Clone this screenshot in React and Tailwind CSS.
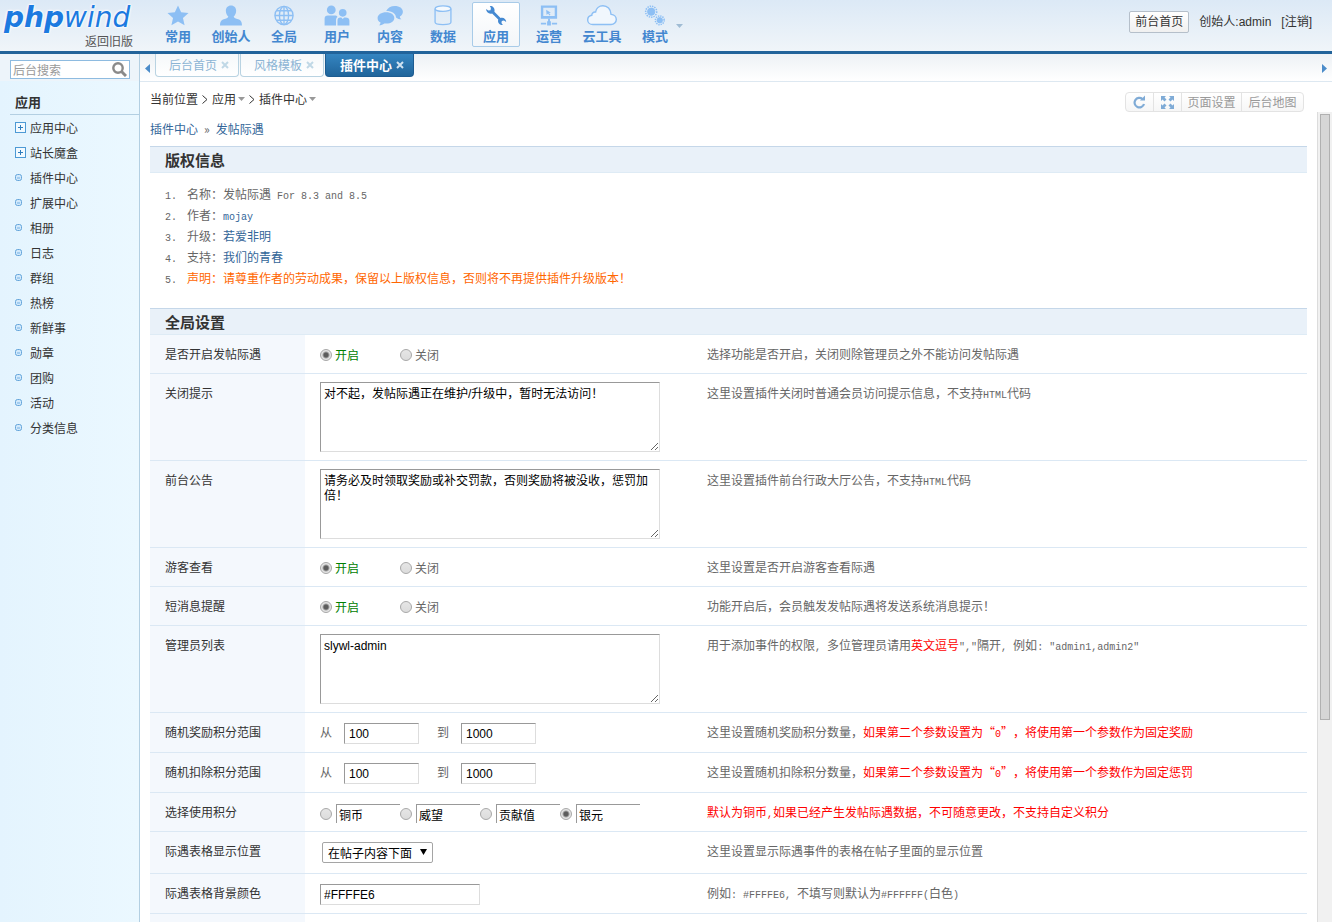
import React, { useState } from "react";

const navItems = [
  { name: "常用", icon: "star" },
  { name: "创始人", icon: "person" },
  { name: "全局", icon: "globe" },
  { name: "用户", icon: "users" },
  { name: "内容", icon: "chat" },
  { name: "数据", icon: "data" },
  { name: "应用", icon: "wrench" },
  { name: "运营", icon: "network" },
  { name: "云工具", icon: "cloud" },
  { name: "模式", icon: "gears" },
];

const menuItems = [
  { name: "应用中心", folder: true },
  { name: "站长魔盒", folder: true },
  { name: "插件中心" },
  { name: "扩展中心" },
  { name: "相册" },
  { name: "日志" },
  { name: "群组" },
  { name: "热榜" },
  { name: "新鲜事" },
  { name: "勋章" },
  { name: "团购" },
  { name: "活动" },
  { name: "分类信息" },
];

const credits = ["铜币", "威望", "贡献值", "银元"];

const NavIcon = ({ type }) => {
  switch (type) {
    case "star":
      return (
        <path d="M16 .5l3.300 7 7.700.8-5.800 5.200 1.700 7.700L16 17.400l-6.900 3.800 1.700-7.700L5 8.300l7.700-.8z" fill="currentColor" />
      );
    case "person":
      return (
        <path d="M16 0.500c3.400 0 5.400 2.500 5.400 5.600 0 2.600-1 4.800-2.600 6 .3 1.700 2.400 2 4.700 2.800 2.600.9 4 2.400 4 6.600h-23c0-4.200 1.400-5.700 4-6.600 2.300-.8 4.400-1.100 4.700-2.800-1.600-1.200-2.600-3.400-2.600-6 0-3.100 2-5.600 5.400-5.600z" fill="currentColor" />
      );
    case "globe":
      return (
        <g fill="none" stroke="currentColor" strokeWidth="1.400">
          <circle cx="16" cy="11" r="9.500" />
          <ellipse cx="16" cy="11" rx="4.800" ry="9.500" />
          <path d="M16 1.500v19M6.500 11h19M8 6h16M8 16h16" />
        </g>
      );
    case "users":
      return (
        <g fill="currentColor">
          <circle cx="10" cy="5.200" r="4.600" />
          <path d="M3 21.500v-7c0-2.500 1.200-3.500 3.500-3.500h7c1.500 0 2.500.5 3 1.500-1 .8-1.500 1.800-1.500 3.300v5.700z" />
          <circle cx="22" cy="8.200" r="4" />
          <path d="M16.500 21.500v-5c0-2 1-3.300 3-3.300h1l1.500 1.500 1.500-1.500h1.500c2.500 0 4 1 4 3.300v5z" />
        </g>
      );
    case "chat":
      return (
        <g fill="currentColor">
          <path d="M12 7.500c5 0 8.500 2.500 8.500 6s-3.500 6-8.500 6l-2-.1c-1.500 1.300-3.500 2-5.500 1.900 1-.8 1.500-1.800 1.600-2.900C4 17.300 3 15.500 3 13.500c0-3.500 4-6 9-6z" />
          <path d="M12 6.300C13.500 3 17 1 21 1c5 0 8.500 2.500 8.500 6 0 2.200-1.300 4-3.200 5 .1 1.300.7 2.300 1.700 3-2.200 0-4.200-.6-5.700-2 -.2-4-4-6.700-10.300-6.700z" />
        </g>
      );
    case "data":
      return (
        <g fill="none" stroke="currentColor" strokeWidth="1.400">
          <ellipse cx="16" cy="3.800" rx="8.300" ry="2.800" fill="#f4f9fe" />
          <path d="M7.700 4v14c0 1.500 3 2.500 8.300 2.500s8.300-1 8.300-2.500V4" />
        </g>
      );
    case "wrench":
      return (
        <path d="M9.500 1c3-.3 5.300 2 5 5l-.2 1.200 6.500 6.300c3-1 5.700 1 5.900 4.200l-2.400-1.500-2.200.5-.4 2.200 1.500 2.100c-3.400 0-5.800-2.500-4.900-5.900l-6.400-6.200C8.500 9.800 5.600 7.500 5.600 4.200l2.400 1.600 2.300-.4.400-2.300z" fill="currentColor" />
      );
    case "network":
      return (
        <g fill="currentColor">
          <path fillRule="evenodd" d="M7.500 0.500h17v14h-17zM10 3v8.500h12V3z" />
          <path d="M13 5l5 3-2 .3 1.500 2-1 .7-1.500-2-1.500 1.500zM15 14.500h2V17h-2zM7.500 18.500H13v2H7.500zM19 18.500h5.500v2H19zM14 17h4v4.500h-4z" />
        </g>
      );
    case "cloud":
      return (
        <path d="M6.500 20.500h19c3 0 5.500-2.400 5.500-5.200 0-3-2.300-5.300-5.500-5.500C25.300 4.300 21.500.8 17 .8c-4 0-7.200 2.500-7.700 6.500C6.500 7 5.300 9 5.300 10.800 2.700 11.300 1 13.500 1 15.700c0 2.800 2.400 4.800 5.500 4.800z" fill="#f1f7fd" stroke="currentColor" strokeWidth="1.500" />
      );
    default:
      return (
        <g fill="none" stroke="currentColor">
          <circle cx="12" cy="7" r="5.800" strokeWidth="1.600" strokeDasharray="1.500 1" />
          <circle cx="12" cy="7" r="3.800" fill="currentColor" />
          <circle cx="21" cy="16" r="4.600" strokeWidth="1.600" strokeDasharray="1.400 1" />
          <circle cx="21" cy="16" r="2.800" fill="currentColor" />
        </g>
      );
  }
};

// half-width characters take exactly half of a 12px hanzi
const mix = (text) =>
  text.split(/([\x20-\x7e]+)/).map((part, i) =>
    i % 2 ? (
      <span key={i} className="whitespace-pre-wrap font-['Liberation_Mono',monospace] text-[10px] leading-none">
        {part}
      </span>
    ) : (
      part
    )
  );

const Caret = ({ className }) => (
  <svg className={className} width="7" height="4" viewBox="0 0 7 4">
    <path d="M0 0h7L3.500 4z" fill="currentColor" />
  </svg>
);

const Chevron = () => (
  <svg className="mx-1" width="6" height="9" viewBox="0 0 6 9">
    <path d="M.5.5l4.500 4-4.500 4" fill="none" stroke="#333" />
  </svg>
);

const Radio = (props) => (
  <input
    type="radio"
    className="h-3 w-3 shrink-0 appearance-none rounded-full border border-[#a9a9a9] bg-linear-to-b from-[#e6e6e6] to-[#dcdcdc] checked:bg-[radial-gradient(circle,#5c5c5c_0_2px,#e4e4e4_4px)]"
    {...props}
  />
);

const Section = ({ children }) => (
  <h2 className="h-[27px] border-t border-b border-t-[#c5d7e9] border-b-[#deebf5] bg-[#e9f1f9] px-[15px] text-[15px] leading-[25px] font-bold text-[#333]">
    {children}
  </h2>
);

const Row = ({ label, htmlFor, children, hint }) => (
  <tr className="border-b border-[#dbe8f4] align-top">
    <th scope="row" className="bg-[#f4f8fd] px-[15px] py-2 text-left leading-[22px] font-normal text-[#333]">
      {htmlFor ? <label htmlFor={htmlFor}>{label}</label> : label}
    </th>
    <td className="px-[15px] py-2">{children}</td>
    <td className="px-[15px] py-2 leading-[22px]">{hint}</td>
  </tr>
);

const Switch = ({ name }) => {
  const [on, setOn] = useState(true);
  return (
    <div className="flex h-[22px] pt-0.5">
      <label className="flex w-20 items-center gap-[3px] text-[#008000]">
        <Radio name={name} checked={on} onChange={() => setOn(true)} />
        开启
      </label>
      <label className="flex w-20 items-center gap-[3px]">
        <Radio name={name} checked={!on} onChange={() => setOn(false)} />
        关闭
      </label>
    </div>
  );
};

const Area = (props) => (
  <textarea
    className="block h-[70px] w-[340px] border border-t-[#999] border-r-[#ddd] border-b-[#ddd] border-l-[#999] bg-white px-[3px] py-1 font-['Liberation_Sans','Noto_Sans_CJK_SC',sans-serif] leading-[15px] text-black"
    {...props}
  />
);

const Box = ({ className, ...props }) => (
  <input
    type="text"
    className={`h-[21px] border border-t-[#999] border-r-[#ddd] border-b-[#ddd] border-l-[#999] bg-white font-['Liberation_Sans','Noto_Sans_CJK_SC',sans-serif] text-black ${className}`}
    {...props}
  />
);

const Range = ({ id }) => (
  <div className="flex h-[23px] items-start">
    <label htmlFor={`${id}From`} className="w-6 leading-[22px]">从</label>
    <Box id={`${id}From`} className="mt-0.5 w-[75px] px-1" defaultValue="100" />
    <label htmlFor={`${id}To`} className="ml-[18px] w-6 leading-[22px]">到</label>
    <Box id={`${id}To`} className="mt-0.5 w-[75px] px-1" defaultValue="1000" />
  </div>
);

const Tab = ({ name, active }) => (
  <div
    className={
      active
        ? "flex h-[23px] items-center gap-1 rounded-b border border-t-0 border-[#1d5c91] bg-linear-to-b from-[#3585c1] to-[#20659b] pr-[9px] pl-[14px] text-white"
        : "flex h-[23px] items-center gap-1 rounded-b border border-t-0 border-[#b9d3e2] bg-linear-to-b from-[#f5f8fa] to-white pr-[9px] pl-[13px] text-[#8cb4d4]"
    }
  >
    <a href="#" className={active ? "text-[13px] font-bold" : ""}>{name}</a>
    <button type="button" aria-label={`关闭${name}`} className={active ? "text-[#cfe2f1]" : "text-[#c0d8e6]"}>
      <svg width="8" height="8" viewBox="0 0 8 8">
        <path d="M1 1l6 6M7 1L1 7" stroke="currentColor" strokeWidth="2" />
      </svg>
    </button>
  </div>
);

const App = () => {
  const [credit, setCredit] = useState("银元");

  return (
    <div
      lang="zh-CN"
      className="flex h-screen flex-col overflow-hidden bg-white font-['Noto_Sans_CJK_SC',sans-serif] text-xs text-[#666] [text-spacing-trim:space-all]"
    >
      <header className="flex h-[54px] shrink-0 justify-between border-b-[3px] border-[#22639a] bg-linear-to-b from-[#dce9f6] to-[#f0f5f9]">
        <div className="flex">
          <div className="flex w-[154px] flex-col pt-px pl-1">
            <div className="h-[33px] font-['DejaVu_Sans',sans-serif] text-[28px] leading-[33px] whitespace-nowrap text-[#1c7ae0] italic [text-shadow:0_0_2px_#fff,0_0_3px_#fff,0_0_3px_#fff]">
              <b>php</b>wind
            </div>
            <a href="#" className="mr-[21px] text-right leading-[14px] text-[#555]">返回旧版</a>
          </div>
          <nav className="flex gap-[5px] pt-0.5">
            {navItems.map((item) => (
              <a
                href="#"
                key={item.name}
                className={
                  item.icon === "wrench"
                    ? "flex h-[45px] w-12 flex-col items-center rounded-xs border border-[#a8cbe8] bg-linear-to-b from-white to-[#f3f6f9] pt-0.5 text-[#4489d2]"
                    : "flex h-[45px] w-12 flex-col items-center border border-transparent pt-0.5 text-[#8dbff4]"
                }
              >
                <svg width="32" height="22" viewBox="0 0 32 22">
                  <NavIcon type={item.icon} />
                </svg>
                <span className="text-[13px] leading-5 font-bold whitespace-nowrap text-[#4387d0]">
                  {item.name}
                </span>
              </a>
            ))}
            <button type="button" aria-label="更多" className="-ml-2 h-12 text-[#a0bcd4]">
              <Caret />
            </button>
          </nav>
        </div>
        <div className="mt-3 flex h-5 items-center gap-2.5 pr-5 font-['Liberation_Sans','Noto_Sans_CJK_SC',sans-serif] text-[#333]">
          <button
            type="button"
            className="h-[22px] rounded-xs border border-[#b5bfca] bg-linear-to-b from-white to-[#f0f0f0] px-[5px]"
          >
            前台首页
          </button>
          <span>创始人:admin</span>
          <a href="#">[注销]</a>
        </div>
      </header>

      <div className="flex min-h-0 flex-1">
        <aside className="w-[140px] shrink-0 border-r border-[#b3cfe2] bg-linear-to-r from-[#e4f4fe] to-[#ebf8ff]">
          <div className="h-[27px] bg-[#edf4fa] px-2.5 pt-1.5 pr-[9px]">
            <div className="flex h-[19px] items-center border border-[#8ebbe0] bg-white px-0.5">
              <input
                type="text"
                aria-label="后台搜索"
                placeholder="后台搜索"
                className="min-w-0 flex-1 bg-transparent outline-none placeholder:text-[#999]"
              />
              <button type="button" aria-label="搜索">
                <svg width="15" height="15" viewBox="0 0 15 15" fill="none" stroke="#8a8a8a">
                  <circle cx="6" cy="6" r="4.700" strokeWidth="2.400" />
                  <path d="M9.500 9.500l4.500 4.500" strokeWidth="3" />
                </svg>
              </button>
            </div>
          </div>
          <h1 className="mt-2.5 ml-2.5 h-6 border-b border-[#b3cfe2] pl-[5px] text-[13px] leading-[22px] font-bold text-[#333]">
            应用
          </h1>
          <ul className="text-[#333]">
            {menuItems.map((item) => (
              <li key={item.name}>
                <a href="#" className="flex h-[25px] items-center pl-[15px]">
                  <span className="w-[15px]">
                    {item.folder ? (
                      <svg width="11" height="11" viewBox="0 0 11 11">
                        <rect x=".5" y=".5" width="10" height="10" fill="#f2faff" stroke="#4d9ad5" />
                        <path d="M3 5.500h5M5.500 3v5" stroke="#2f7dbd" />
                      </svg>
                    ) : (
                      <svg width="7" height="7" viewBox="0 0 7 7">
                        <rect x=".5" y=".5" width="6" height="6" rx="2" fill="#d2e9fb" stroke="#65a5da" />
                        <path d="M2 3.500h3M2 4.500h3" stroke="#a3cdf0" />
                      </svg>
                    )}
                  </span>
                  {item.name}
                </a>
              </li>
            ))}
          </ul>
        </aside>

        <main className="flex min-w-0 flex-1 flex-col">
          <div className="flex h-7 shrink-0 items-start justify-between border-b border-[#dde8f1] bg-linear-to-b from-[#edf1f5] to-white pr-[5px] pl-[5px]">
            <div className="flex gap-px">
              <button type="button" aria-label="向左" className="mr-1 h-7 text-[#4c8cca]">
                <svg width="5" height="9" viewBox="0 0 5 9">
                  <path d="M5 0v9L0 4.500z" fill="currentColor" />
                </svg>
              </button>
              <Tab name="后台首页" />
              <Tab name="风格模板" />
              <Tab name="插件中心" active />
            </div>
            <button type="button" aria-label="向右" className="h-7 text-[#4c8cca]">
              <svg width="5" height="9" viewBox="0 0 5 9">
                <path d="M0 0v9l5-4.500z" fill="currentColor" />
              </svg>
            </button>
          </div>

          <div className="flex h-[30px] shrink-0 items-end justify-between pr-7 pl-2.5">
            <div className="flex h-6 items-start text-[#333]">
              <div className="flex h-[22px] items-center">
                当前位置
                <Chevron />
                <a href="#" className="flex items-center gap-0.5">
                  应用
                  <Caret className="text-[#999]" />
                </a>
                <Chevron />
                <a href="#" className="flex items-center gap-0.5">
                  插件中心
                  <Caret className="text-[#999]" />
                </a>
              </div>
            </div>
            <div className="flex h-5 divide-x divide-[#e3e3e3] rounded-sm border border-[#e3e3e3] bg-linear-to-b from-white to-[#f6f6f6] text-[#999]">
              <button type="button" aria-label="刷新" className="flex w-7 items-center justify-center">
                <svg width="13" height="14" viewBox="0 0 13 14" fill="none" stroke="#7fabd6" strokeWidth="2.200">
                  <path d="M9.500 4A4.800 4.800 0 1 0 11 9" />
                  <path d="M7 5.500h5V.5z" fill="#7fabd6" stroke="none" />
                </svg>
              </button>
              <button type="button" aria-label="全屏" className="flex w-7 items-center justify-center">
                <svg width="13" height="13" viewBox="0 0 13 13" fill="#7fabd6">
                  <path d="M0 0h5L3.500 1.500l2 2-2 2-2-2L0 5zM13 0v5l-1.500-1.500-2 2-2-2 2-2L8 0zM0 13V8l1.500 1.500 2-2 2 2-2 2L5 13zM13 13H8l1.500-1.500-2-2 2-2 2 2L13 8z" />
                </svg>
              </button>
              <button type="button" className="w-[60px]">页面设置</button>
              <button type="button" className="w-[61px]">后台地图</button>
            </div>
          </div>

          <div className="flex min-h-0 flex-1">
            <div className="min-w-0 flex-1 overflow-hidden px-2.5">
              <div className="my-[7px] flex h-5 items-center gap-1.5 text-[#336699]">
                <a href="#">插件中心</a>
                <span className="text-[#666]">»</span>
                <a href="#">发帖际遇</a>
              </div>

              <Section>版权信息</Section>
              <ol className="px-[15px] pt-2.5 pb-5 leading-[21px]">
                <li className="flex"><span className="w-[22px]">{mix("1.")}</span>{"名称："}<span>{mix("发帖际遇 For 8.3 and 8.5")}</span></li>
                <li className="flex"><span className="w-[22px]">{mix("2.")}</span>{"作者："}<a href="#" className="text-[#336699]">{mix("mojay")}</a></li>
                <li className="flex"><span className="w-[22px]">{mix("3.")}</span>{"升级："}<a href="#" className="text-[#336699]">若爱非明</a></li>
                <li className="flex"><span className="w-[22px]">{mix("4.")}</span>{"支持："}<a href="#" className="text-[#336699]">我们的青春</a></li>
                <li className="flex"><span className="w-[22px]">{mix("5.")}</span><span className="text-[#ff6600]">声明：请尊重作者的劳动成果，保留以上版权信息，否则将不再提供插件升级版本！</span></li>
              </ol>

              <Section>全局设置</Section>
              <table className="w-full table-fixed">
                <colgroup>
                  <col className="w-[155px]" />
                  <col className="w-[387px]" />
                  <col />
                </colgroup>
                <tbody>
                  <Row label="是否开启发帖际遇" hint="选择功能是否开启，关闭则除管理员之外不能访问发帖际遇">
                    <Switch name="open" />
                  </Row>
                  <Row label="关闭提示" htmlFor="closeTip" hint={mix("这里设置插件关闭时普通会员访问提示信息，不支持HTML代码")}>
                    <Area id="closeTip" defaultValue="对不起，发帖际遇正在维护/升级中，暂时无法访问！" />
                  </Row>
                  <Row label="前台公告" htmlFor="notice" hint={mix("这里设置插件前台行政大厅公告，不支持HTML代码")}>
                    <Area id="notice" defaultValue="请务必及时领取奖励或补交罚款，否则奖励将被没收，惩罚加倍！" />
                  </Row>
                  <Row label="游客查看" hint="这里设置是否开启游客查看际遇">
                    <Switch name="guest" />
                  </Row>
                  <Row label="短消息提醒" hint="功能开启后，会员触发发帖际遇将发送系统消息提示！">
                    <Switch name="message" />
                  </Row>
                  <Row
                    label="管理员列表"
                    htmlFor="admins"
                    hint={
                      <>
                        {mix("用于添加事件的权限, 多位管理员请用")}
                        <span className="text-[#ff0000]">英文逗号</span>
                        {mix('","隔开, 例如: "admin1,admin2"')}
                      </>
                    }
                  >
                    <Area id="admins" defaultValue="slywl-admin" />
                  </Row>
                  <Row
                    label="随机奖励积分范围"
                    hint={
                      <>
                        这里设置随机奖励积分数量，
                        <span className="text-[#ff0000]">{mix("如果第二个参数设置为“0”，将使用第一个参数作为固定奖励")}</span>
                      </>
                    }
                  >
                    <Range id="reward" />
                  </Row>
                  <Row
                    label="随机扣除积分范围"
                    hint={
                      <>
                        这里设置随机扣除积分数量，
                        <span className="text-[#ff0000]">{mix("如果第二个参数设置为“0”，将使用第一个参数作为固定惩罚")}</span>
                      </>
                    }
                  >
                    <Range id="punish" />
                  </Row>
                  <Row
                    label="选择使用积分"
                    hint={
                      <span className="text-[#ff0000]">
                        {mix("默认为铜币,如果已经产生发帖际遇数据，不可随意更改，不支持自定义积分")}
                      </span>
                    }
                  >
                    <div className="flex h-[22px] items-center pt-[3px]">
                      {credits.map((name) => (
                        <div key={name} className="flex w-20 items-center gap-1">
                          <Radio
                            name="credit"
                            aria-label={name}
                            checked={credit === name}
                            onChange={() => setCredit(name)}
                          />
                          <input
                            type="text"
                            aria-label={`${name}名称`}
                            defaultValue={name}
                            className="h-[19px] w-16 border-t border-l border-[#999] bg-white px-0.5 text-black"
                          />
                        </div>
                      ))}
                    </div>
                  </Row>
                  <Row label="际遇表格显示位置" htmlFor="position" hint="这里设置显示际遇事件的表格在帖子里面的显示位置">
                    <div className="relative mt-0.5 mb-0.5 ml-0.5 h-[21px] w-[111px]">
                      <select
                        id="position"
                        className="block h-[21px] w-full appearance-none rounded-xs border border-[#a5a5a5] bg-white px-[5px] leading-[19px] text-black"
                      >
                        <option>在帖子内容下面</option>
                      </select>
                      <svg className="pointer-events-none absolute top-[7px] right-[6px]" width="7" height="6" viewBox="0 0 7 6">
                        <path d="M0 0h7L3.500 6z" fill="#000" />
                      </svg>
                    </div>
                  </Row>
                  <Row label="际遇表格背景颜色" htmlFor="bgColor" hint={mix("例如: #FFFFE6, 不填写则默认为#FFFFFF(白色)")}>
                    <div className="pt-0.5">
                      <Box id="bgColor" className="block w-40 px-[3px]" defaultValue="#FFFFE6" />
                    </div>
                  </Row>
                  <tr>
                    <th className="h-10 bg-[#f4f8fd]"></th>
                    <td></td>
                    <td></td>
                  </tr>
                </tbody>
              </table>
            </div>
            <div className="w-[15px] shrink-0 border-l border-[#dcdcdc] bg-[#f1f1f1] pt-0.5 pr-0.5 pl-0.5">
              <div className="h-[75%] border border-[#b0b0b0] bg-[#d6d6d6]"></div>
            </div>
          </div>
        </main>
      </div>
    </div>
  );
};

export default App;
